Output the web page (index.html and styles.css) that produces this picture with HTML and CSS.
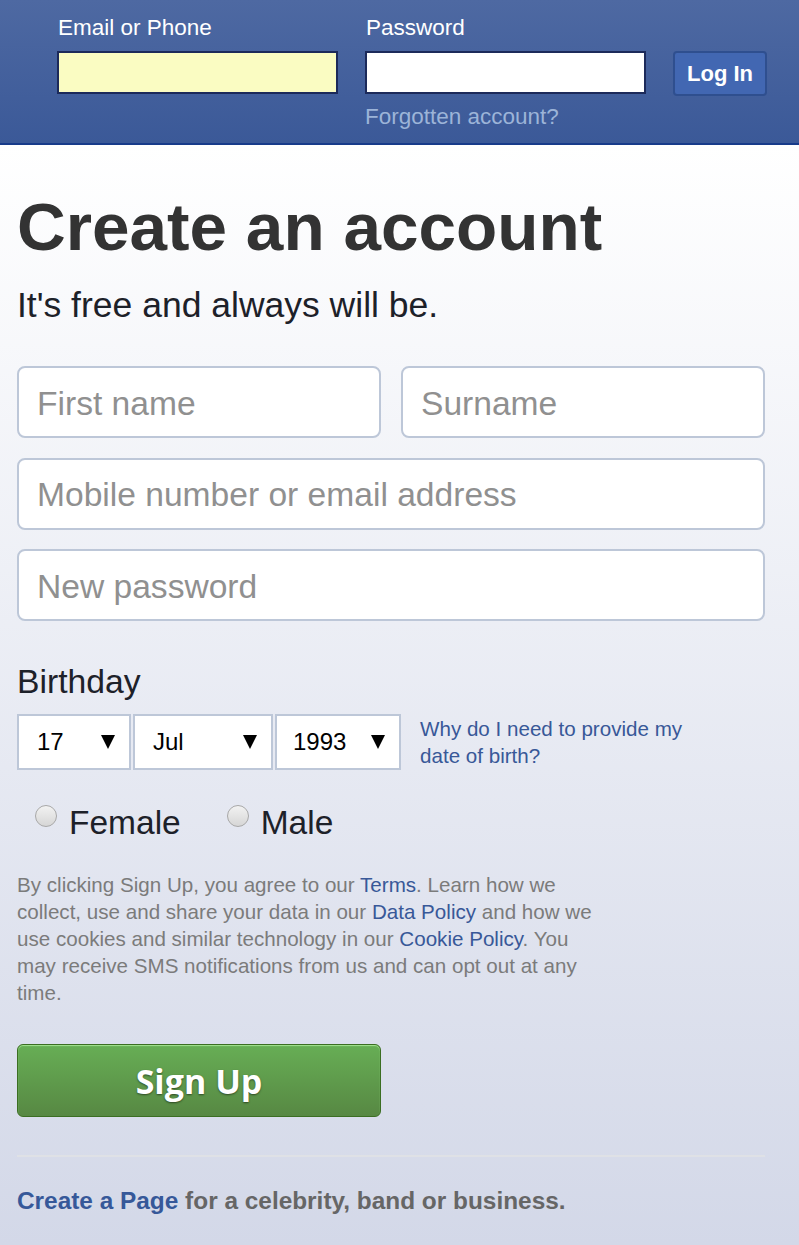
FILE: index.html
```html
<!DOCTYPE html>
<html lang="en">
<head>
    <meta charset="UTF-8">
    <meta name="viewport" content="width=device-width, initial-scale=1.0">
    <title>Sign Up</title>
    <link rel="stylesheet" href="styles.css">
</head>
<body>
    <!-- Barra de login -->
    <header class="topbar">
        <form class="login" onsubmit="return false">
            <label class="login-label label-email" for="login-email">Email or Phone</label>
            <label class="login-label label-pass" for="login-pass">Password</label>
            <input class="login-input input-email autofill" type="text" id="login-email">
            <input class="login-input input-pass" type="password" id="login-pass">
            <button class="login-button">Log In</button>
            <a class="forgot" href="#">Forgotten account?</a>
        </form>
    </header>

    <!-- Registro -->
    <main class="signup">
        <h1 class="title">Create an account</h1>
        <p class="subtitle">It's free and always will be.</p>

        <div class="name-row">
            <input class="field" type="text" placeholder="First name">
            <input class="field" type="text" placeholder="Surname">
        </div>
        <input class="field field-full" type="text" placeholder="Mobile number or email address">
        <input class="field field-full" type="password" placeholder="New password">

        <h2 class="birthday-label">Birthday</h2>
        <div class="birthday-row">
            <div class="select select-day"><span>17</span><span class="arrow"></span></div>
            <div class="select select-month"><span>Jul</span><span class="arrow"></span></div>
            <div class="select select-year"><span>1993</span><span class="arrow"></span></div>
            <a class="why" href="#">Why do I need to provide my date of birth?</a>
        </div>

        <div class="gender-row">
            <label class="gender"><input class="radio" type="radio" name="sex">Female</label>
            <label class="gender"><input class="radio" type="radio" name="sex">Male</label>
        </div>

        <p class="terms">By clicking Sign Up, you agree to our <a href="#">Terms</a>. Learn how we collect, use and share your data in our <a href="#">Data Policy</a> and how we use cookies and similar technology in our <a href="#">Cookie Policy</a>. You may receive SMS notifications from us and can opt out at any time.</p>

        <button class="signup-button">Sign Up</button>

        <div class="divider"></div>

        <p class="page-link"><a href="#">Create a Page</a> for a celebrity, band or business.</p>
    </main>
</body>
</html>
```

FILE: styles.css
```css
body {
    margin: 0;
    font-family: "Liberation Sans", Arial, sans-serif;
    background: #d3d8e8;
}

a {
    text-decoration: none;
}

/* barra superior */
.topbar {
    background: linear-gradient(#4e69a2, #3b5998);
    border-bottom: 2px solid #183b8a;
    padding: 15px 0 13px 57px;
}

.login {
    display: grid;
    grid-template-columns: 281px 281px 94px;
    column-gap: 27px;
    grid-template-areas:
        "lemail lpass ."
        "iemail ipass btn"
        ". forgot .";
}

.login-label {
    color: #fff;
    font-size: 22.5px;
    line-height: 26px;
    margin-bottom: 10px;
}

.label-email { grid-area: lemail; padding-left: 1px; }
.label-pass { grid-area: lpass; padding-left: 1px; }
.input-email { grid-area: iemail; }
.input-pass { grid-area: ipass; }

.login-input {
    box-sizing: border-box;
    height: 43px;
    border: 2px solid #1c2a5a;
    background: #fff;
    margin: 0;
    font-size: 20px;
}

.login-input.autofill {
    background: #fafcc2;
}

.login-button {
    grid-area: btn;
    box-sizing: border-box;
    height: 45px;
    margin: 0;
    background: #4267b2;
    border: 2px solid #2f4f8f;
    border-radius: 4px;
    color: #fff;
    font-family: "Liberation Sans", Arial, sans-serif;
    font-weight: bold;
    font-size: 22px;
    padding: 0;
}

.forgot {
    grid-area: forgot;
    color: #9cb4d8;
    font-size: 22.5px;
    line-height: 26px;
    margin-top: 8px;
}

/* area de registro */
.signup {
    background: linear-gradient(#fff, #d3d8e8);
    min-height: calc(100vh - 145px);
    box-sizing: border-box;
    padding: 42px 0 20px 17px;
}

.signup > * {
    width: 748px;
}

.title {
    margin: 0;
    color: #333;
    font-size: 67.5px;
    line-height: 80px;
    font-weight: bold;
}

.subtitle {
    margin: 18px 0 0;
    color: #1d2129;
    font-size: 35.5px;
    line-height: 40px;
}

.name-row {
    display: flex;
    gap: 20px;
    margin-top: 41px;
}

.field {
    box-sizing: border-box;
    flex: 1;
    min-width: 0;
    height: 72px;
    border: 2px solid #bdc7d8;
    border-radius: 8px;
    padding: 3px 18px 0;
    background: #fff;
    font-family: "Liberation Sans", Arial, sans-serif;
    font-size: 33.6px;
    color: #1d2129;
    outline: none;
}

.name-row .field {
    width: 0;
}

.field::placeholder {
    color: #909090;
}

.field-full {
    display: block;
    margin-top: 19.5px;
}

.birthday-label {
    margin: 40px 0 0;
    font-weight: normal;
    color: #1d2129;
    font-size: 33.7px;
    line-height: 40px;
}

.birthday-row {
    display: flex;
    align-items: center;
    gap: 2px;
    margin-top: 13px;
}

.select {
    box-sizing: border-box;
    height: 56px;
    display: flex;
    align-items: center;
    justify-content: space-between;
    padding: 0 14px 0 18px;
    border: 2px solid #bdc7d8;
    background: #fff;
    font-size: 24px;
    color: #000;
}

.select-day { width: 114px; }
.select-month { width: 140px; }
.select-year { width: 126px; padding-left: 16px; }

.arrow {
    width: 0;
    height: 0;
    border-left: 7px solid transparent;
    border-right: 7px solid transparent;
    border-top: 14px solid #000;
}

.why {
    width: 280px;
    margin-left: 17px;
    color: #385898;
    font-size: 20.6px;
    line-height: 27px;
}

.gender-row {
    display: flex;
    margin-top: 33px;
    padding-left: 18px;
    box-sizing: border-box;
}

.gender {
    display: flex;
    align-items: flex-start;
    gap: 12px;
    color: #1d2129;
    font-size: 33.5px;
    line-height: 40px;
    margin-right: 46px;
}

.radio {
    appearance: none;
    -webkit-appearance: none;
    width: 22px;
    height: 22px;
    margin: 2px 0 0;
    border-radius: 50%;
    border: 1px solid #a8a8a8;
    background: linear-gradient(#f2f2f2, #d6d6d6);
}

.terms {
    width: 592px;
    margin: 28px 0 0;
    color: #7b7b7b;
    font-size: 20.6px;
    line-height: 27px;
}

.terms a {
    color: #385898;
}

.signup-button {
    display: block;
    width: 364px;
    height: 73px;
    margin-top: 38px;
    padding: 0;
    border: 1px solid #3b6e22;
    border-radius: 6px;
    background: linear-gradient(#67ae55, #578843);
    box-shadow: inset 0 1px 1px #a4e391;
    color: #fff;
    font-family: "Open Sans", sans-serif;
    font-weight: bold;
    font-size: 34px;
    text-shadow: 0 1px 2px rgba(0, 0, 0, 0.5);
}

.divider {
    height: 2px;
    margin-top: 38px;
    background: #dfe1e6;
}

.page-link {
    margin: 29px 0 0;
    color: #666;
    font-weight: bold;
    font-size: 24.4px;
    line-height: 30px;
}

.page-link a {
    color: #365899;
}
```
